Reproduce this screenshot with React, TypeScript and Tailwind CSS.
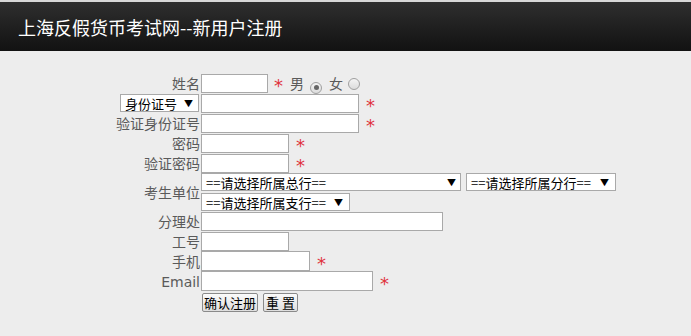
import React from "react";

const F = { fontFamily: '"Noto Sans CJK SC", "Noto Sans", sans-serif' } as const;

function Star({ ml = "ml-[7px]" }: { ml?: string }) {
  return (
    <span
      className={`${ml} text-[#e0323c] text-[18px] leading-none mt-[6px]`}
      style={{ fontFamily: '"DejaVu Sans", sans-serif' }}
    >
      *
    </span>
  );
}

function Input({ w, h = "h-[19px]" }: { w: string; h?: string }) {
  return <div className={`${w} ${h} bg-white border border-[#a9a9a9] shrink-0`} />;
}

function Select({ w, text, arrowMr = "mr-[6px]" }: { w: string; text: string; arrowMr?: string }) {
  return (
    <div className={`${w} h-[18px] bg-white border border-[#a9a9a9] flex items-center justify-between pl-[4px] shrink-0 overflow-hidden`}>
      <span className="text-[13px] text-black leading-none">{text}</span>
      <span className={`text-[9px] text-black leading-none ${arrowMr}`}>▼</span>
    </div>
  );
}

function Label({ children }: { children: React.ReactNode }) {
  return (
    <div className="w-[86px] text-right text-[14px] text-[#5a5a5a] leading-none pr-[1px] shrink-0">{children}</div>
  );
}

function Radio({ checked }: { checked?: boolean }) {
  return (
    <span className="inline-flex items-center justify-center w-[12px] h-[12px] rounded-full border border-[#a0a0a0] bg-gradient-to-b from-[#f4f4f4] to-[#dcdcdc]">
      {checked && <span className="w-[5px] h-[5px] rounded-full bg-[#666]" />}
    </span>
  );
}

function Button({ children, w }: { children: React.ReactNode; w: string }) {
  return (
    <div className={`${w} h-[19px] border border-[#8a8a8a] rounded-[2px] bg-gradient-to-b from-[#fbfbfb] to-[#dedede] flex items-center justify-center text-[13px] text-black leading-none`}>
      {children}
    </div>
  );
}

export default function App() {
  return (
    <div className="w-[691px] h-[336px] bg-[#ededed] overflow-hidden" style={F}>
      <div className="h-[2px] bg-[#d8d8d8]" />
      <div className="h-[49px] bg-gradient-to-b from-[#2f2f2f] to-[#121212] flex items-center pl-[18px]">
        <span className="text-white text-[18px] leading-none">上海反假货币考试网--新用户注册</span>
      </div>
      <div className="pl-[115px] pt-[22px] flex flex-col">
        <div className="h-[20px] flex items-center">
          <Label>姓名</Label>
          <Input w="w-[67px]" />
          <Star ml="ml-[6px]" />
          <span className="ml-[7px] text-[14px] text-[#5a5a5a] leading-none">男</span>
          <span className="ml-[6px]"><Radio checked /></span>
          <span className="ml-[7px] text-[14px] text-[#5a5a5a] leading-none">女</span>
          <span className="ml-[5px]"><Radio /></span>
        </div>
        <div className="h-[20px] flex items-center">
          <div className="w-[86px] flex justify-end pr-[2px] shrink-0">
            <Select w="w-[79px]" text="身份证号" arrowMr="mr-[5px]" />
          </div>
          <Input w="w-[158px]" />
          <Star />
        </div>
        <div className="h-[20px] flex items-center">
          <Label>验证身份证号</Label>
          <Input w="w-[158px]" />
          <Star />
        </div>
        <div className="h-[20px] flex items-center">
          <Label>密码</Label>
          <Input w="w-[88px]" />
          <Star />
        </div>
        <div className="h-[20px] flex items-center">
          <Label>验证密码</Label>
          <Input w="w-[88px]" />
          <Star />
        </div>
        <div className="h-[38px] flex items-center">
          <Label>考生单位</Label>
          <div className="flex flex-col gap-[2px]">
            <div className="flex items-center">
              <Select w="w-[260px]" text="==请选择所属总行==" arrowMr="mr-[4px]" />
              <div className="ml-[5px]">
                <Select w="w-[150px]" text="==请选择所属分行==" />
              </div>
            </div>
            <Select w="w-[149px]" text="==请选择所属支行==" arrowMr="mr-[6px]" />
          </div>
        </div>
        <div className="h-[20px] flex items-center">
          <Label>分理处</Label>
          <Input w="w-[242px]" />
        </div>
        <div className="h-[20px] flex items-center">
          <Label>工号</Label>
          <Input w="w-[88px]" />
        </div>
        <div className="h-[20px] flex items-center">
          <Label>手机</Label>
          <Input w="w-[109px]" h="h-[20px]" />
          <Star />
        </div>
        <div className="h-[20px] flex items-center">
          <Label><span style={{ fontFamily: '"DejaVu Sans", Verdana, sans-serif' }} className="text-[14px]">Email</span></Label>
          <Input w="w-[172px]" h="h-[20px]" />
          <Star />
        </div>
        <div className="h-[22px] flex items-center pl-[87px] gap-[5px]">
          <Button w="w-[56px]">确认注册</Button>
          <Button w="w-[35px]">重 置</Button>
        </div>
      </div>
    </div>
  );
}
